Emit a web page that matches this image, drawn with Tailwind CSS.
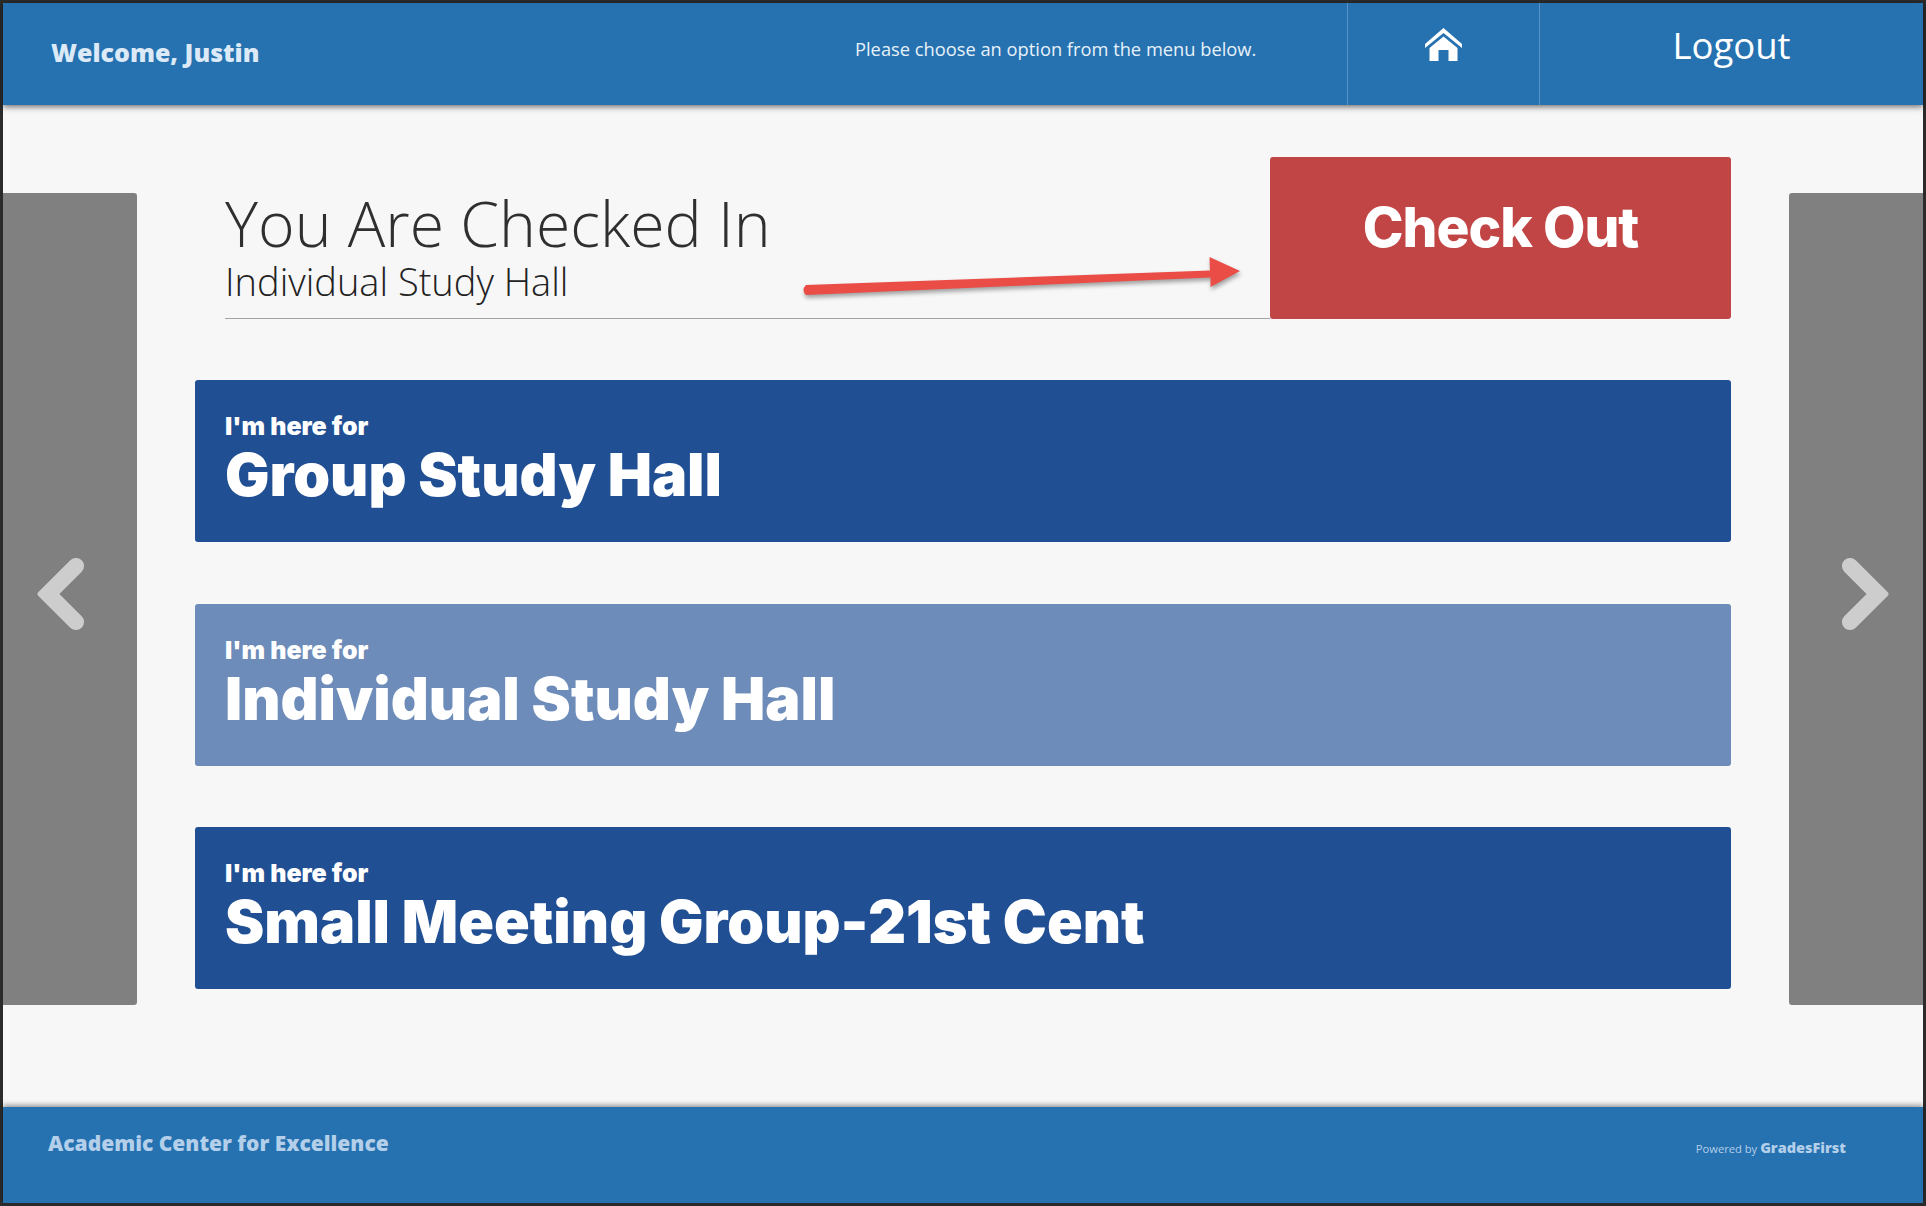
<!DOCTYPE html>
<html lang="en">

<head>
    <meta charset="UTF-8">
    <title>Check In</title>
    <script src="https://cdn.jsdelivr.net/npm/@tailwindcss/browser@4"></script>
</head>

<body class="bg-[#2b2b2b] p-[3px] font-['Open_Sans',sans-serif]">
    <div class="h-[1200px] flex flex-col bg-[#f7f7f7]">
        <!-- Header -->
        <header class="relative z-10 h-[102px] flex bg-[#2671b0] shadow-[0_2px_6px_rgba(0,0,0,0.55)]">
            <div class="w-[852px] pl-[48px] pt-[32px] text-[25px] leading-[34px] font-extrabold text-[#dce9f6]">Welcome, Justin</div>
            <div class="w-[492px] pt-[32px] text-[18.3px] leading-[28px] text-[#e8f1f9]">Please choose an option from the menu below.</div>
            <div class="w-[193px] flex justify-center pt-[25px] border-x border-[#5a93c4]">
                <svg class="w-[37px] h-[33px]" viewBox="0 0 37 33" fill="#fff">
                    <path d="M18.5 0 L37 16 L37 20 L18.5 5 L0 20 L0 16 Z" />
                    <path d="M4.500 20 L18.500 8.500 L32.500 20 V33 H23.500 V22 H13.500 V33 H4.500 Z" />
                </svg>
            </div>
            <div class="flex-1 text-center pt-[16px] text-[36.500px] leading-[52px] text-white">Logout</div>
        </header>

        <!-- Main -->
        <main class="relative flex-1 flex items-start">
            <div class="w-[134px] h-[812px] mt-[88px] pl-[33px] pt-[365px] bg-[#808080] rounded-r-[3px]">
                <svg class="w-[49px] h-[73px]" viewBox="37 558 49 73" fill="#cdcdcd">
                    <path d="M39.4 592 L71.3 560.300 A8 8 0 0 1 82.700 571.700 L60.400 594 L82.700 616.300 A8 8 0 0 1 71.300 627.700 L39.400 596 Q37.400 594 39.400 592 Z" />
                </svg>
            </div>

            <div class="w-[1536px] mx-[58px] pt-[52px]">
                <div class="h-[162px] flex">
                    <div class="flex-1 ml-[30px] pt-[33px] border-b border-[#a3a3a3]">
                        <h1 class="text-[62.500px] leading-[66px] font-light text-[#2f2f2f]">You Are Checked In</h1>
                        <p class="text-[38px] leading-[50px] font-light text-[#222]">Individual Study Hall</p>
                    </div>
                    <button class="w-[461px] h-[162px] pb-[22px] bg-[#c24545] rounded-[3px] text-[55px] tracking-[-1px] font-['Inter',sans-serif] font-extrabold text-white">Check Out</button>
                </div>

                <div class="mt-[61px] flex flex-col gap-[61.500px] font-['Inter',sans-serif] text-white">
                    <div class="h-[162px] pl-[30px] pt-[30px] bg-[#204f94] rounded-[3px]">
                        <p class="text-[25px] leading-[32px] font-black">I'm here for</p>
                        <p class="text-[59px] leading-[66px] font-black">Group Study Hall</p>
                    </div>
                    <div class="h-[162px] pl-[30px] pt-[30px] bg-[#6d8cb9] rounded-[3px]">
                        <p class="text-[25px] leading-[32px] font-black">I'm here for</p>
                        <p class="text-[59px] leading-[66px] font-black">Individual Study Hall</p>
                    </div>
                    <div class="h-[162px] pl-[30px] pt-[30px] bg-[#204f94] rounded-[3px]">
                        <p class="text-[25px] leading-[32px] font-black">I'm here for</p>
                        <p class="text-[59px] leading-[66px] font-black">Small Meeting Group-21st Cent</p>
                    </div>
                </div>
            </div>

            <div class="w-[134px] h-[812px] mt-[88px] pr-[33px] pt-[365px] flex justify-end bg-[#808080] rounded-l-[3px]">
                <svg class="w-[49px] h-[73px] -scale-x-100" viewBox="37 558 49 73" fill="#cdcdcd">
                    <path d="M39.4 592 L71.3 560.300 A8 8 0 0 1 82.700 571.700 L60.400 594 L82.700 616.300 A8 8 0 0 1 71.300 627.700 L39.400 596 Q37.400 594 39.400 592 Z" />
                </svg>
            </div>

            <!-- Annotation arrow -->
            <svg class="absolute left-[795px] top-[147px] w-[450px] h-[45px] drop-shadow-[1px_3px_2px_rgba(0,0,0,0.35)]" viewBox="0 0 450 45" fill="#ea4c46">
                <path d="M8 33 L412 18.500 L411.500 5 L442 19 L412.500 35 L412.500 25.500 L8 43 Q3 38 8 33 Z" />
            </svg>
        </main>

        <!-- Footer -->
        <footer class="relative z-10 h-[96px] flex justify-between bg-[#2671b0] shadow-[0_-2px_5px_rgba(0,0,0,0.4)] text-[#b3cfe9]">
            <div class="pl-[45px] pt-[21px] text-[21px] leading-[30px] font-extrabold">Academic Center for Excellence</div>
            <div class="pr-[77px] pt-[31px] text-[11.200px] leading-[20px]">Powered by <span class="text-[14.500px] font-extrabold">GradesFirst</span></div>
        </footer>
    </div>
</body>

</html>
